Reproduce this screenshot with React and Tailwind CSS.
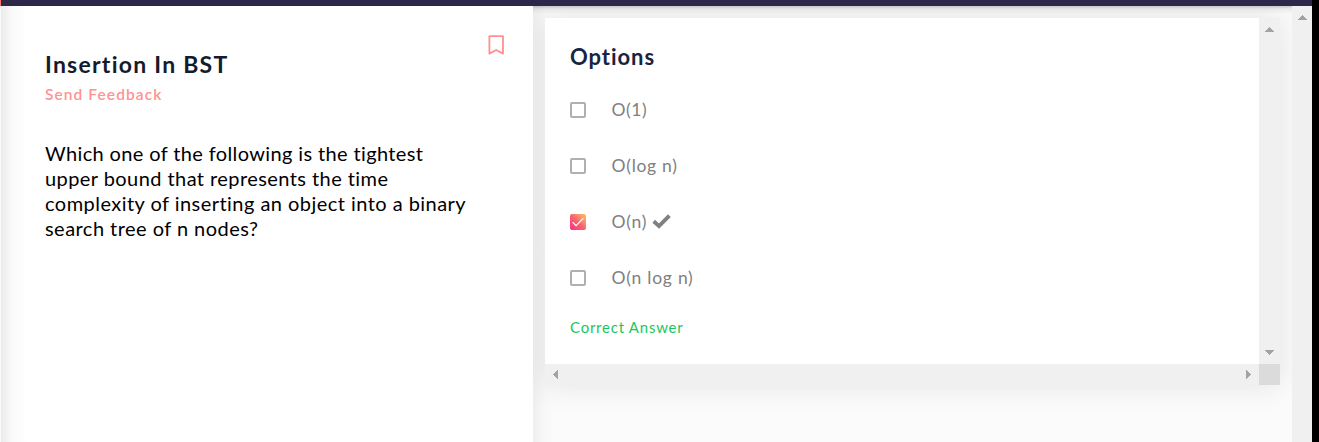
import React from "react";

const questionLines = [
  { text: "Which one of the following is the tightest", tracking: "tracking-[0.37px]" },
  { text: "upper bound that represents the time", tracking: "tracking-[0.43px]" },
  { text: "complexity of inserting an object into a binary", tracking: "tracking-[0.46px]" },
  { text: "search tree of n nodes?", tracking: "tracking-[0.46px]" },
];

const options = [
  { label: "O(1)", tracking: "tracking-[0.5px]" },
  { label: "O(log n)", tracking: "tracking-[0.7px]" },
  { label: "O(n)", tracking: "tracking-[0.7px]", checked: true },
  { label: "O(n log n)", tracking: "tracking-[0.74px]" },
];

function Arrow({ direction }) {
  const points = {
    up: "0,5 4.5,0 9,5",
    down: "0,0 9,0 4.5,5",
    left: "5,0 5,9 0,4.5",
    right: "0,0 5,4.5 0,9",
  }[direction];
  const vertical = direction === "up" || direction === "down";
  return (
    <svg width={vertical ? 9 : 5} height={vertical ? 5 : 9} shapeRendering="crispEdges" className="block shrink-0">
      <polygon points={points} fill="#a3a3a3" />
    </svg>
  );
}

function Checkbox({ checked }) {
  if (!checked) return <span className="size-4 shrink-0 rounded-[2px] border-2 border-[#b0b0b0] bg-white" />;
  return (
    <span className="flex size-4 shrink-0 items-center justify-center rounded-[2px] bg-linear-to-tr from-[#f8277f] via-[#f8636f] to-[#fbc45c]">
      <svg width="16" height="16" viewBox="0 0 16 16" fill="none">
        <path d="M2.6 8.2 6.1 11.7 13.4 4.2" stroke="#fff" strokeWidth="1.2" />
      </svg>
    </span>
  );
}

function QuestionPanel() {
  return (
    <section className="flex w-[533px] shrink-0 bg-white">
      <div className="w-px bg-[#fafafa]" />
      <div className="w-[26px] bg-linear-to-r from-[#ebebeb] via-[#fafafa] via-45% to-white" />
      <div className="flex grow flex-col pl-[18px] pt-[43px]">
        <div className="flex h-[30px] justify-between">
          <h1 className="whitespace-nowrap text-[23px] leading-[30px] font-bold tracking-[1.25px] text-[#141c2c]">Insertion In BST</h1>
          <svg width="16" height="20" viewBox="0 0 16 20" fill="none" className="mr-[29px] -mt-[14px] shrink-0">
            <path d="M1.4 1.2H15V18.6L8.2 15 1.4 18.6Z" stroke="#ff8f90" strokeWidth="1.8" strokeLinejoin="round" />
          </svg>
        </div>
        <a className="mt-[5px] block whitespace-nowrap text-[15.5px] leading-5 font-semibold tracking-[1.08px] text-[#ff9292]">Send Feedback</a>
        <p className="mt-[37px] text-[20px] leading-[25px] text-black">
          {questionLines.map((l) => (
            <span key={l.text} className={"block whitespace-nowrap " + l.tracking}>{l.text}</span>
          ))}
        </p>
      </div>
    </section>
  );
}

function OptionsCard() {
  return (
    <div className="grid h-[367px] w-[735px] shrink-0 grid-cols-[714px_21px] grid-rows-[346px_21px] shadow-[0_0_30px_rgba(0,0,0,0.1)]">
      <div className="bg-white pl-[25px] pt-[24px]">
        <h2 className="text-[22px] leading-[30px] font-bold tracking-[0.95px] text-[#172442]">Options</h2>
        <ul className="mt-[10px]">
          {options.map((o) => (
            <li key={o.label} className="flex h-14 items-center">
              <Checkbox checked={o.checked} />
              <span className={"ml-[25.6px] whitespace-nowrap text-[17.5px] leading-6 text-[#808080] " + o.tracking}>{o.label}</span>
              {o.checked && (
                <svg width="19" height="15" viewBox="0 0 19 15" className="ml-[5px] -mt-px">
                  <path d="M1.7 7.3 7 12.1 17.4 1.7" fill="none" stroke="#808080" strokeWidth="3.9" />
                </svg>
              )}
            </li>
          ))}
        </ul>
        <p className="mt-[9px] text-[15px] leading-6 tracking-[0.76px] text-[#1cc65d]">Correct Answer</p>
      </div>
      <div className="flex flex-col items-center justify-between bg-[#f0f0f0] pt-[9px] pb-[9px]">
        <Arrow direction="up" />
        <Arrow direction="down" />
      </div>
      <div className="flex items-center justify-between bg-[#f0f0f0] px-2">
        <Arrow direction="left" />
        <Arrow direction="right" />
      </div>
      <div className="bg-[#dbdbdb]" />
    </div>
  );
}

export default function App() {
  return (
    <div className="flex h-[442px] w-[1319px] overflow-hidden bg-black font-['Lato',sans-serif]">
      <div className="flex w-[1312px] shrink-0 flex-col">
        <header className="flex h-[6px] shrink-0 bg-[#2d2849]">
          <div className="w-px bg-[#ff7365]" />
        </header>
        <div className="flex grow">
          <QuestionPanel />
          <main className="w-[759px] shrink-0 overflow-hidden bg-[#fbfbfb] bg-[linear-gradient(to_bottom,rgba(0,0,0,0.2),rgba(0,0,0,0.06)_3px,transparent_8px),linear-gradient(to_right,rgba(0,0,0,0.05),rgba(0,0,0,0.01)_12px,transparent_22px)] pl-3 pt-3">
            <OptionsCard />
          </main>
          <div className="flex w-5 justify-center bg-[#f0f0f0] pt-[9px]">
            <Arrow direction="up" />
          </div>
        </div>
      </div>
    </div>
  );
}
